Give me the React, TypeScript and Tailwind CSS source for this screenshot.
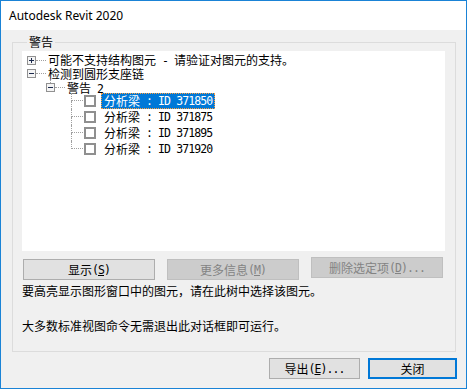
import type { ReactNode } from 'react';

const cjk = "font-['Noto_Sans_CJK_SC',sans-serif]";

// ASCII runs are drawn in a narrow fixed-width face, like the dialog's fallback font
function Mono({ children }: { children: ReactNode }) {
  return (
    <span className="font-['DejaVu_Sans_Mono',monospace] text-[11.5px] tracking-[-0.9px] whitespace-pre">
      {children}
    </span>
  );
}

function Expander({ open }: { open: boolean }) {
  return (
    <svg width="9" height="9" viewBox="0 0 9 9" className="shrink-0" shapeRendering="crispEdges">
      <rect x="0.5" y="0.5" width="8" height="8" fill="#f4f4f4" stroke="#919191" />
      <path d="M2 4.5h5" stroke="#1c2a4d" />
      {!open && <path d="M4.5 2v5" stroke="#1c2a4d" />}
    </svg>
  );
}

function Beam({ id, selected, last }: { id: string; selected?: boolean; last?: boolean }) {
  return (
    <div className="h-[16px] flex pl-[49px]">
      {/* tree connector */}
      <div className="w-[12px] flex flex-col">
        <span className="h-[8px] border-l border-b border-dotted border-[#a0a0a0]" />
        <span className={`flex-1 ${last ? '' : 'border-l border-dotted border-[#a0a0a0]'}`} />
      </div>
      <span className="ml-[1px] self-center w-[12px] h-[12px] border-2 border-[#8f8f8f] bg-white" />
      <span
        className={`ml-[5px] h-full flex items-center px-[2px] border leading-[14px] ${
          selected ? 'bg-[#0078d7] text-white border-dotted border-[#ffa040]' : 'border-transparent'
        }`}
      >
        分析梁<Mono> : ID {id}</Mono>
      </span>
    </div>
  );
}

function Button({
  children,
  disabled,
  primary,
  className = '',
}: {
  children: ReactNode;
  disabled?: boolean;
  primary?: boolean;
  className?: string;
}) {
  const look = disabled
    ? 'bg-[#cccccc] border border-[#bfbfbf] text-[#838383]'
    : primary
      ? 'bg-[#e1e1e1] border-2 border-[#0078d7] text-black'
      : 'bg-[#e1e1e1] border border-[#adadad] text-black';
  return (
    <div className={`h-[21px] flex items-center justify-center text-[12px] leading-[14px] ${look} ${className}`}>
      {children}
    </div>
  );
}

export default function App() {
  return (
    <div className={`w-[467px] h-[389px] border border-[#1a83d6] bg-[#f0f0f0] flex flex-col text-black ${cjk}`}>
      {/* Title bar */}
      <div className="h-[29px] bg-white flex items-center pl-[8px] font-['Noto_Sans',sans-serif] text-[12px]">
        Autodesk Revit 2020
      </div>

      {/* Group box */}
      <fieldset className="ml-[11px] mt-[4px] w-[444px] h-[318px] border border-[#dcdcdc] pl-[9px] pr-[10px]">
        <legend className="ml-[5px] px-[2px] text-[12px] leading-[16px]">警告</legend>

        {/* Tree */}
        <div className="mt-[1px] h-[200px] bg-white pt-[2px] text-[12px]">
          <div className="h-[14px] flex items-center pl-[5px]">
            <Expander open={false} />
            <span className="w-[10px] border-t border-dotted border-[#a0a0a0]" />
            <span className="pl-[2px] leading-[13px]">
              可能不支持结构图元<Mono> - </Mono>请验证对图元的支持。
            </span>
          </div>
          <div className="h-[13px] flex items-center pl-[5px]">
            <Expander open />
            <span className="w-[10px] border-t border-dotted border-[#a0a0a0]" />
            <span className="pl-[2px] leading-[13px]">检测到圆形支座链</span>
          </div>
          <div className="h-[13px] flex items-start pl-[24px]">
            <div className="w-[9px] flex flex-col">
              <span className="h-[3px] ml-[4px] border-l border-dotted border-[#a0a0a0]" />
              <Expander open />
            </div>
            <span className="mt-[7px] w-[10px] border-t border-dotted border-[#a0a0a0]" />
            <span className="pl-[2px] leading-[13px] mt-[1px]">
              警告<Mono> 2</Mono>
            </span>
          </div>
          <Beam id="371850" selected />
          <Beam id="371875" />
          <Beam id="371895" />
          <Beam id="371920" last />
        </div>

        {/* Tree actions */}
        <div className="mt-[6px] ml-[1px] flex items-start gap-[12px]">
          <Button className="w-[132px] mt-[2px]">
            显示<Mono>(<u>S</u>)</Mono>
          </Button>
          <Button className="w-[132px] mt-[2px]" disabled>
            更多信息<Mono>(<u>M</u>)</Mono>
          </Button>
          <Button className="w-[132px]" disabled>
            删除选定项<Mono>(<u>D</u>)...</Mono>
          </Button>
        </div>

        <p className="mt-[3px] text-[12px] leading-[16px]">要高亮显示图形窗口中的图元，请在此树中选择该图元。</p>
        <p className="mt-[19px] text-[12px] leading-[16px]">大多数标准视图命令无需退出此对话框即可运行。</p>
      </fieldset>

      {/* Dialog buttons */}
      <div className="mt-[6px] mr-[9px] flex justify-end gap-[8px]">
        <Button className="w-[91px]">
          导出<Mono>(<u>E</u>)...</Mono>
        </Button>
        <Button className="w-[89px]" primary>
          关闭
        </Button>
      </div>
    </div>
  );
}
